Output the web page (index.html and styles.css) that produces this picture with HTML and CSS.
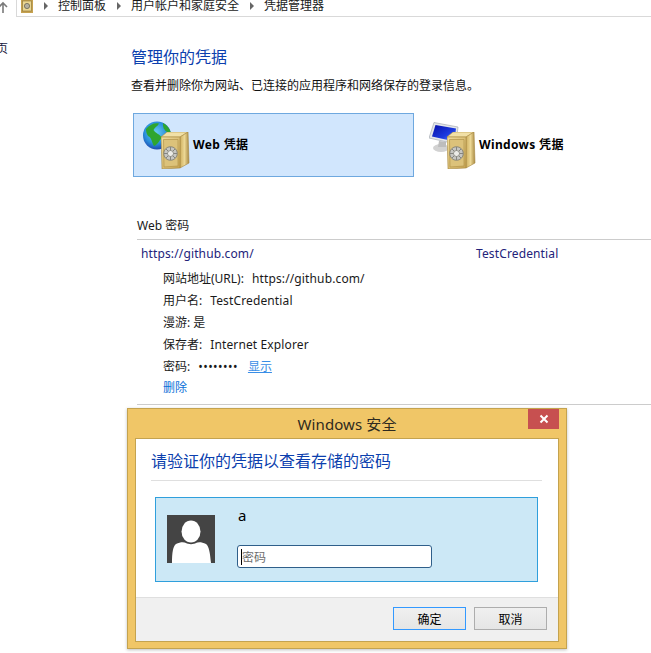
FILE: index.html
```html
<!DOCTYPE html>
<html lang="zh-CN">
<head>
    <meta charset="UTF-8">
    <title>凭据管理器</title>
    <link rel="stylesheet" href="styles.css">
</head>
<body>

    <svg class="defs" width="0" height="0">
        <defs>
            <linearGradient id="safeFront" x1="0" y1="0" x2="1" y2="1">
                <stop offset="0" stop-color="#efdc9c"/>
                <stop offset="1" stop-color="#c6a250"/>
            </linearGradient>
            <linearGradient id="safeSide" x1="0" y1="0" x2="1" y2="0">
                <stop offset="0" stop-color="#cfb05f"/>
                <stop offset="0.5" stop-color="#ecd794"/>
                <stop offset="1" stop-color="#a98a43"/>
            </linearGradient>
            <radialGradient id="globeSea" cx="0.45" cy="0.4" r="0.65">
                <stop offset="0" stop-color="#6cd0f2"/>
                <stop offset="0.6" stop-color="#2a8fdc"/>
                <stop offset="1" stop-color="#1c3aa5"/>
            </radialGradient>
            <linearGradient id="screen" x1="0" y1="0" x2="1" y2="1">
                <stop offset="0" stop-color="#070fa8"/>
                <stop offset="0.6" stop-color="#1b3ae0"/>
                <stop offset="1" stop-color="#7f9bee"/>
            </linearGradient>
            <symbol id="safe" viewBox="0 0 30 37">
                <path d="M0 5 L6 0 L27 0 L19 5 Z" fill="#f1e0a6" stroke="#b59645" stroke-width=".6"/>
                <path d="M19 5 L27 0 L28 31 L19 36 Z" fill="url(#safeSide)" stroke="#a6873f" stroke-width=".6"/>
                <path d="M0 5 L19 5 L19 36 L1 37 Z" fill="url(#safeFront)" stroke="#a6873f" stroke-width=".6"/>
                <path d="M2.500 7.500 L17 7.500 L17 34 L3 35 Z" fill="#dcc27a" stroke="#b3954a" stroke-width=".7"/>
                <circle cx="9.500" cy="21.500" r="6.800" fill="#c6c6c2" stroke="#77776f" stroke-width=".8"/>
                <path d="M9.500 15 V28 M3 21.500 H16 M5 17 L14 26 M14 17 L5 26" stroke="#85857f" stroke-width="1"/>
                <circle cx="9.500" cy="21.500" r="3" fill="#ecece8" stroke="#77776f" stroke-width=".7"/>
            </symbol>
        </defs>
    </svg>

    <div class="toolbar">
        <svg class="up-arrow" width="10" height="12" viewBox="0 0 10 12"><path d="M5 12 V2 M1 6 L5 2 L9 6" fill="none" stroke="#7a7a7a" stroke-width="1.6"/></svg>
        <div class="address">
            <span class="address-icon"><svg width="12" height="13"><rect width="12" height="13" fill="#c6a250"/><rect x="1.500" y="1" width="9" height="10" fill="#ead692" stroke="#8d7435" stroke-width=".6"/><circle cx="6" cy="6" r="2.600" fill="#b5b1a0" stroke="#6b6654" stroke-width=".8"/></svg></span>
            <span class="chevron"></span><span>控制面板</span>
            <span class="chevron"></span><span>用户帐户和家庭安全</span>
            <span class="chevron"></span><span>凭据管理器</span>
        </div>
    </div>

    <div class="page">
        <div class="sidebar">页</div>
        <div class="content">
            <h1 class="title">管理你的凭据</h1>
            <p class="intro">查看并删除你为网站、已连接的应用程序和网络保存的登录信息。</p>

            <div class="tiles">
                <div class="tile tile-active">
                    <svg class="tile-icon" width="48" height="48" viewBox="0 0 48 48">
                        <circle cx="14" cy="14.500" r="14" fill="url(#globeSea)"/>
                        <path d="M3 8 C7 3 12 1.500 16 2.500 C15 5 12 6 10.500 9 C12 12 17 13 19 17 C16 19 15 24 11 25 C8.500 21 9 17 5 15 C3.500 13 3 10 3 8 Z" fill="#2fa52f"/>
                        <path d="M20 2 C24 4 27 8 28 12 L24 11 C21 9 19.500 6 20 2 Z" fill="#2fa52f"/>
                        <use href="#safe" x="18" y="11" width="30" height="37"/>
                    </svg>
                    <span class="tile-label">Web 凭据</span>
                </div>
                <div class="tile">
                    <svg class="tile-icon" width="48" height="48" viewBox="0 0 48 48">
                        <ellipse cx="12" cy="27" rx="8" ry="4" fill="#d2d2d2"/>
                        <path d="M10 20 L17 21 L17 26 L9 26 Z" fill="#bdbdbd"/>
                        <path d="M5 1.500 L29 6 L27 23 L0 17 Z" fill="#e3e6ea" stroke="#9aa0a8" stroke-width=".6"/>
                        <path d="M6.500 4 L27 7.500 L25.500 20.500 L3 15.500 Z" fill="url(#screen)"/>
                        <use href="#safe" x="18" y="11" width="30" height="37"/>
                    </svg>
                    <span class="tile-label">Windows 凭据</span>
                </div>
            </div>

            <h2 class="section-title">Web 密码</h2>
            <div class="credential">
                <div class="credential-head">
                    <span class="credential-url">https://github.com/</span>
                    <span class="credential-user">TestCredential</span>
                </div>
                <ul class="details">
                    <li>网站地址(URL):<span class="value">https://github.com/</span></li>
                    <li>用户名:<span class="value">TestCredential</span></li>
                    <li>漫游: 是</li>
                    <li>保存者:<span class="value">Internet Explorer</span></li>
                    <li>密码:<span class="dots">••••••••</span><a class="link" href="#">显示</a></li>
                    <li><span class="link-plain">删除</span></li>
                </ul>
            </div>
        </div>
    </div>

    <div class="dialog">
        <div class="dialog-title">
            <span>Windows 安全</span>
            <div class="close"><svg width="10" height="10" viewBox="0 0 10 10"><path d="M1.500 1.500 L8.500 8.500 M8.500 1.500 L1.500 8.500" stroke="#fff" stroke-width="2"/></svg></div>
        </div>
        <div class="dialog-body">
            <div class="dialog-main">
                <h3 class="dialog-heading">请验证你的凭据以查看存储的密码</h3>
                <div class="login">
                    <svg class="avatar" width="48" height="48" viewBox="0 0 48 48">
                        <rect width="48" height="48" fill="#444"/>
                        <path d="M5 48 C5 38 6 31 9 29 C13 27 17 27 19 28 C21 29.500 27 29.500 29 28 C31 27 35 27 39 29 C42 31 43 38 44 48 Z" fill="#fff"/>
                        <ellipse cx="24" cy="16.500" rx="9.500" ry="11" fill="#fff"/>
                    </svg>
                    <div class="login-fields">
                        <div class="login-name">a</div>
                        <div class="password"><i class="caret"></i>密码</div>
                    </div>
                </div>
            </div>
            <div class="dialog-footer">
                <button class="btn btn-default">确定</button>
                <button class="btn">取消</button>
            </div>
        </div>
    </div>

</body>
</html>
```

FILE: styles.css
```css
* {
    box-sizing: border-box;
}
html, body {
    height: 100%;
}
body {
    margin: 0;
    position: relative;
    overflow: hidden;
    background: #fff;
    color: #1a1a1a;
    font-family: "Noto Sans", "Noto Sans CJK SC", sans-serif;
    font-size: 12px;
}
.defs {
    position: absolute;
}

/* top bar */
.toolbar {
    display: flex;
    height: 18px;
}
.up-arrow {
    margin: 1px 8px 0 -2px;
    flex: none;
}
.address {
    display: flex;
    align-items: center;
    flex: 1;
    height: 17px;
    padding: 0 0 4px 4px;
    border-left: 1px solid #d9d9d9;
    border-bottom: 1px solid #d9d9d9;
    white-space: nowrap;
    line-height: 12px;
}
.address-icon {
    display: flex;
    align-self: flex-start;
}
.chevron {
    flex: none;
    width: 0;
    height: 0;
    margin: 0 10px 0 11px;
    border-left: 4px solid #666;
    border-top: 4px solid transparent;
    border-bottom: 4px solid transparent;
}

/* main area */
.page {
    display: flex;
}
.sidebar {
    flex: none;
    width: 135px;
    padding-top: 21px;
    margin-left: -4px;
    color: #1a1a40;
}
.content {
    flex: 1;
    min-width: 0;
}
.title {
    margin: 28px 0 0;
    font-size: 16px;
    font-weight: normal;
    line-height: 22px;
    color: #0c3fae;
}
.intro {
    margin: 9px 0 0;
    line-height: 18px;
    color: #111;
}
.tiles {
    display: flex;
    gap: 5px;
    margin: 18px 0 0 2px;
}
.tile {
    display: flex;
    align-items: center;
    gap: 2px;
    flex: 0 0 281px;
    height: 64px;
    padding-left: 9px;
    border: 1px solid transparent;
    font-weight: bold;
    letter-spacing: .35px;
    color: #000;
}
.tile-active {
    background: #d1e6fd;
    border-color: #6ea8df;
}
.tile-icon {
    flex: none;
}
.tile-label {
    margin-bottom: 2px;
}
.section-title {
    margin: 40px 0 0 6px;
    font-size: 12px;
    font-weight: normal;
    line-height: 17px;
}
.credential {
    margin: 5px 0 0 6px;
    border-top: 1px solid #ccc;
    border-bottom: 1px solid #ccc;
    padding-bottom: 4.500px;
}
.credential-head {
    display: flex;
    padding: 5px 0 0 4px;
    line-height: 18px;
    letter-spacing: .13px;
    color: #23237a;
}
.credential-url {
    width: 335px;
}
.details {
    list-style: none;
    margin: 5.500px 0 0;
    padding: 0 0 0 26px;
}
.details li {
    display: flex;
    align-items: center;
    height: 21.800px;
    line-height: 20px;
}
.value {
    margin-left: 8px;
    letter-spacing: .13px;
}
.dots {
    margin: 0 10px 0 8px;
    font-size: 12px;
    letter-spacing: .45px;
}
.link {
    color: #3a8ee6;
}
.link-plain {
    color: #0a6fd8;
}

/* security dialog */
.dialog {
    position: absolute;
    left: 127px;
    top: 408px;
    width: 440px;
    height: 241px;
    background: #f0c667;
    border: 1px solid #c4a34f;
    box-shadow: 0 1px 3px rgba(0, 0, 0, 0.25);
}
.dialog-title {
    display: flex;
    justify-content: center;
    align-items: center;
    position: relative;
    height: 29px;
    padding-bottom: 1px;
    font-size: 15px;
    letter-spacing: .1px;
    color: #2e2a20;
}
.close {
    position: absolute;
    top: 0;
    right: 7px;
    display: flex;
    align-items: center;
    justify-content: center;
    width: 31px;
    height: 20px;
    background: #c75050;
}
.dialog-body {
    display: flex;
    flex-direction: column;
    height: 204px;
    margin: 0 7px;
    background: #fff;
    border: 1px solid #c4a34f;
}
.dialog-main {
    flex: 1;
    padding: 0 16px 0 15px;
}
.dialog-heading {
    margin: 0;
    height: 42px;
    padding-top: 11px;
    border-bottom: 1px solid #dfdfdf;
    font-size: 16px;
    font-weight: normal;
    line-height: 22px;
    color: #0c3fae;
}
.login {
    display: flex;
    align-items: flex-start;
    height: 85px;
    margin: 16px 4px 0;
    padding: 17px 0 0 11px;
    background: #cce8f6;
    border: 1px solid #2f9fdc;
}
.avatar {
    flex: none;
}
.login-fields {
    margin-left: 22px;
}
.login-name {
    height: 30px;
    font-size: 15px;
    line-height: 16px;
    margin-top: -8px;
    padding-left: 1px;
    color: #000;
    margin-bottom: 8px;
}
.password {
    display: flex;
    align-items: center;
    width: 195px;
    height: 23px;
    padding-left: 3px;
    background: #fff;
    border: 1px solid #2f5f8a;
    border-radius: 3px;
    color: #6d6d6d;
}
.caret {
    flex: none;
    width: 1px;
    height: 16px;
    background: #000;
}
.dialog-footer {
    display: flex;
    justify-content: flex-end;
    gap: 8px;
    height: 44px;
    padding: 9px 11px 0 0;
    background: #f0f0f0;
    border-top: 1px solid #dfdfdf;
}
.btn {
    width: 73px;
    height: 23px;
    padding: 0;
    font: inherit;
    color: #000;
    background: linear-gradient(#f0f0f0, #e5e5e5);
    border: 1px solid #adadad;
}
.btn-default {
    border-color: #3399ff;
}
```
